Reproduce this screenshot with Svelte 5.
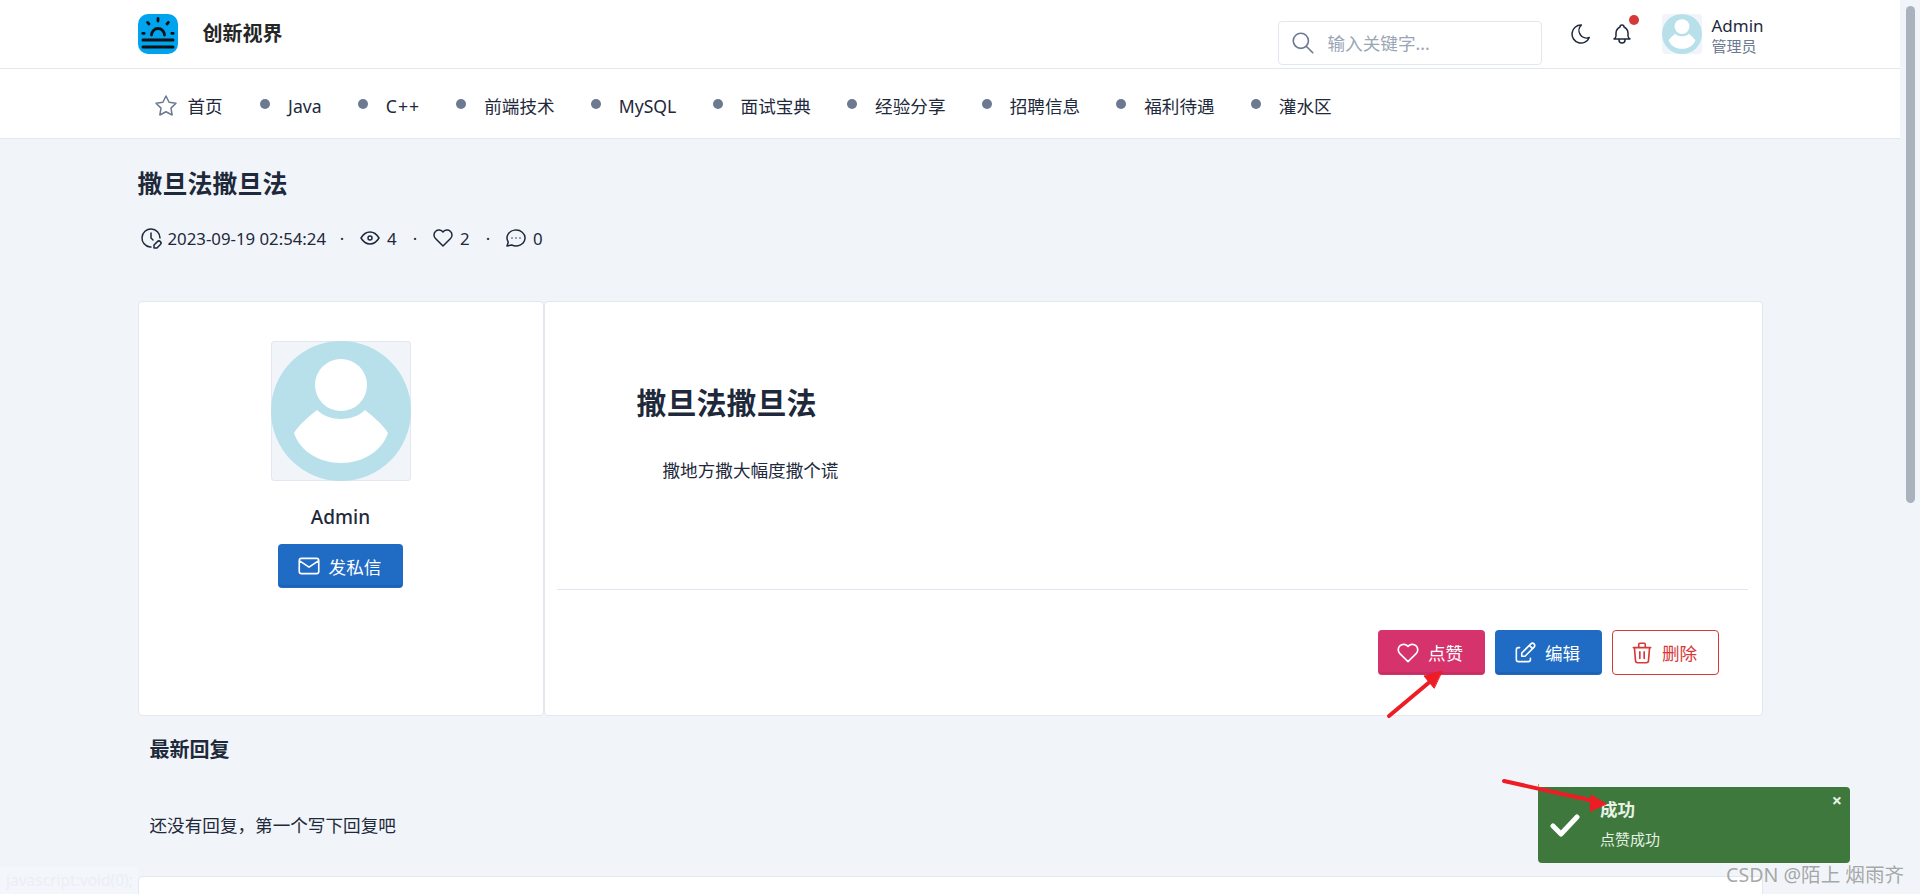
<script lang="ts">
    const navItems = ["Java", "C++", "前端技术", "MySQL", "面试宝典", "经验分享", "招聘信息", "福利待遇", "灌水区"];
</script>

{#snippet avatarArt()}
    <svg viewBox="0 0 140 140" aria-hidden="true">
        <circle cx="70" cy="70" r="70" fill="#b8e0ea" />
        <circle cx="70" cy="44" r="26" fill="#fff" />
        <path
            fill="#fff"
            d="M46 69C36 77 28 84 23 92C29 110 48 122 70 122C92 122 111 110 117 92C112 84 104 77 94 69C88 75 79 78 70 78C61 78 52 75 46 69Z"
        />
    </svg>
{/snippet}

<div class="page">
    <header class="topbar">
        <div class="container topbar-inner">
            <svg class="logo" viewBox="0 0 40 40" aria-hidden="true">
                <rect width="40" height="40" rx="10" fill="#00a3ee" />
                <path d="M13.5 21a6.5 6.5 0 0 1 13 0" fill="none" stroke="#111" stroke-width="2.8" />
                <g fill="#111">
                    <rect x="3.5" y="24.6" width="33" height="3" rx="1.5" />
                    <rect x="3.5" y="31.4" width="33" height="3" rx="1.5" />
                </g>
                <path
                    d="M20 4.5v2.6M9.6 8.4l1.4 1.6M30.4 8.4l-1.4 1.6M4.8 19.4h1.4M33.8 19.4h1.4"
                    fill="none"
                    stroke="#111"
                    stroke-width="2.8"
                    stroke-linecap="round"
                />
            </svg>
            <span class="brand">创新视界</span>
            <label class="search">
                <svg viewBox="0 0 24 24" class="search-icon"><path d="M10 10m-7 0a7 7 0 1 0 14 0a7 7 0 1 0 -14 0M21 21l-6 -6" /></svg>
                <input placeholder="输入关键字..." />
            </label>
            <svg viewBox="0 0 24 24" class="top-icon moon"><path d="M12 3c.132 0 .263 0 .393 0a7.5 7.5 0 0 0 7.92 12.446a9 9 0 1 1 -8.313 -12.454z" /></svg>
            <span class="bell">
                <svg viewBox="0 0 24 24" class="top-icon"><path d="M10 5a2 2 0 1 1 4 0a7 7 0 0 1 4 6v3a4 4 0 0 0 2 3h-16a4 4 0 0 0 2 -3v-3a7 7 0 0 1 4 -6M9 17v1a3 3 0 0 0 6 0v-1" /></svg>
                <i class="badge"></i>
            </span>
            <span class="user-avatar">{@render avatarArt()}</span>
            <div class="user">
                <div class="user-name">Admin</div>
                <div class="user-role">管理员</div>
            </div>
        </div>
    </header>

    <nav class="navbar">
        <div class="container nav-inner">
            <a class="nav-home">
                <svg viewBox="0 0 24 24"><path d="M12 17.75l-6.172 3.245l1.179 -6.873l-5 -4.867l6.9 -1l3.086 -6.253l3.086 6.253l6.9 1l-5 4.867l1.179 6.873z" /></svg>
                首页
            </a>
            {#each navItems as item}
                <a class="nav-item"><i class="nav-dot"></i>{item}</a>
            {/each}
        </div>
    </nav>

    <main class="container">
        <h2 class="page-title">撒旦法撒旦法</h2>
        <div class="meta">
            <svg viewBox="0 0 24 24"><path d="M21 12a9 9 0 1 0 -9.972 8.948c.32 .034 .644 .052 .972 .052M12 7v5l2 2M18.42 15.61a2.1 2.1 0 0 1 2.97 2.97l-3.39 3.42h-3v-3l3.42 -3.39z" /></svg>
            <span>2023-09-19 02:54:24</span>
            <b>·</b>
            <svg viewBox="0 0 24 24"><path d="M10 12a2 2 0 1 0 4 0a2 2 0 0 0 -4 0M21 12c-2.4 4 -5.4 6 -9 6c-3.6 0 -6.6 -2 -9 -6c2.4 -4 5.4 -6 9 -6c3.6 0 6.6 2 9 6" /></svg>
            <span>4</span>
            <b>·</b>
            <svg viewBox="0 0 24 24"><path d="M19.5 12.572l-7.5 7.428l-7.5 -7.428a5 5 0 1 1 7.5 -6.566a5 5 0 1 1 7.5 6.572" /></svg>
            <span>2</span>
            <b>·</b>
            <svg viewBox="0 0 24 24"><path d="M3 20l1.3 -3.9a9 8 0 1 1 3.4 2.9l-4.7 1M12 12l0 .01M8 12l0 .01M16 12l0 .01" /></svg>
            <span>0</span>
        </div>

        <section class="post">
            <aside class="card author">
                <span class="author-avatar">{@render avatarArt()}</span>
                <div class="author-name">Admin</div>
                <button class="btn btn-blue pm">
                    <svg viewBox="0 0 24 24"><path d="M3 7a2 2 0 0 1 2 -2h14a2 2 0 0 1 2 2v10a2 2 0 0 1 -2 2h-14a2 2 0 0 1 -2 -2v-10zM3 7l9 6l9 -6" /></svg>
                    发私信
                </button>
            </aside>
            <article class="card body">
                <div class="body-text">
                    <h1>撒旦法撒旦法</h1>
                    <p>撒地方撒大幅度撒个谎</p>
                </div>
                <div class="actions">
                    <button class="btn btn-pink">
                        <svg viewBox="0 0 24 24"><path d="M19.5 12.572l-7.5 7.428l-7.5 -7.428a5 5 0 1 1 7.5 -6.566a5 5 0 1 1 7.5 6.572" /></svg>
                        点赞
                    </button>
                    <button class="btn btn-blue">
                        <svg viewBox="0 0 24 24"><path d="M7 7h-1a2 2 0 0 0 -2 2v9a2 2 0 0 0 2 2h9a2 2 0 0 0 2 -2v-1M20.385 6.585a2.1 2.1 0 0 0 -2.97 -2.97l-8.415 8.385v3h3l8.385 -8.415zM16 5l3 3" /></svg>
                        编辑
                    </button>
                    <button class="btn btn-outline">
                        <svg viewBox="0 0 24 24"><path d="M4 7h16M10 11v6M14 11v6M5 7l1 12a2 2 0 0 0 2 2h8a2 2 0 0 0 2 -2l1 -12M9 7v-3a1 1 0 0 1 1 -1h4a1 1 0 0 1 1 1v3" /></svg>
                        删除
                    </button>
                </div>
            </article>
        </section>

        <h3 class="reply-title">最新回复</h3>
        <p class="no-reply">还没有回复，第一个写下回复吧</p>
        <section class="card reply-box"></section>
    </main>

    <div class="toast">
        <svg class="toast-check" viewBox="0 0 30 24"><path d="M3 13l8 8L27 4" /></svg>
        <div>
            <div class="toast-title">成功</div>
            <div class="toast-text">点赞成功</div>
        </div>
        <span class="toast-close">×</span>
    </div>

    <svg class="arrows" viewBox="0 0 1920 894" aria-hidden="true">
        <path class="shaft" d="M1389 716L1432 680" />
        <path class="tip" d="M1442 671L1424 676L1434 688Z" />
        <path class="shaft" d="M1504 781L1594 801" />
        <path class="tip" d="M1606 804L1591 795L1590 811Z" />
        <path class="mark" d="M1538.5 784V787" />
    </svg>

    <div class="status">javascript:void(0);</div>
    <div class="scrollbar"><i></i></div>
    <div class="watermark">CSDN @陌上 烟雨齐</div>
</div>

<style>
    :global(body) {
        margin: 0;
        background: #f1f5f9;
        overflow: hidden;
    }

    .page {
        box-sizing: border-box;
        width: 1920px;
        height: 894px;
        padding-right: 20px;
        overflow: hidden;
        font-family: "Noto Sans", "Noto Sans CJK SC", sans-serif;
        font-size: 17.6px;
        color: #1e293b;
    }

    svg {
        fill: none;
        stroke: currentColor;
        stroke-width: 1.5;
        stroke-linecap: round;
        stroke-linejoin: round;
    }

    .container {
        width: 1625px;
        margin: 0 auto;
    }

    .topbar {
        height: 68px;
        background: #fff;
        border-bottom: 1px solid #e2e8f0;
    }

    .topbar-inner {
        display: flex;
        align-items: center;
        height: 68px;
    }

    .logo {
        width: 40px;
        height: 40px;
        stroke: none;
    }

    .brand {
        margin-left: 25px;
        margin-right: auto;
        margin-bottom: 3px;
        font-size: 20px;
        font-weight: 600;
        color: #262626;
    }

    .search {
        display: flex;
        align-items: center;
        box-sizing: border-box;
        width: 264px;
        height: 44px;
        margin-top: 18px;
        padding-left: 11px;
        background: #fff;
        border: 1px solid #e2e8f0;
        border-radius: 4px;
    }

    .search-icon {
        width: 26px;
        height: 26px;
        color: #6c7a91;
    }

    .search input {
        border: 0;
        outline: 0;
        width: 190px;
        margin-left: 12px;
        padding: 0;
        font: inherit;
    }

    .search input::placeholder {
        color: #9aa5b5;
    }

    .top-icon {
        display: block;
        width: 24px;
        height: 24px;
    }

    .moon {
        margin-left: 27px;
    }

    .bell {
        position: relative;
        margin-left: 17px;
    }

    .badge {
        position: absolute;
        top: -7px;
        right: -5px;
        width: 10px;
        height: 10px;
        border-radius: 50%;
        background: #d63939;
    }

    .user-avatar {
        display: block;
        width: 40px;
        height: 40px;
        margin-left: 28px;
        background: #f1f5f9;
        border-radius: 4px;
        overflow: hidden;
    }

    .user-avatar svg,
    .author-avatar svg {
        display: block;
        width: 100%;
        height: 100%;
        stroke: none;
    }

    .user {
        margin-left: 10px;
        margin-top: 3px;
        width: 51px;
        line-height: 20px;
    }

    .user-name {
        font-size: 17px;
    }

    .user-role {
        font-size: 15px;
        color: #6c7a91;
    }

    .navbar {
        height: 69px;
        background: #fff;
        border-bottom: 1px solid #e2e8f0;
    }

    .nav-inner {
        display: flex;
        align-items: center;
        height: 69px;
        padding: 4px 0 0 16px;
        box-sizing: border-box;
    }

    .nav-home {
        display: flex;
        align-items: center;
        gap: 10px;
    }

    .nav-home svg {
        width: 24px;
        height: 24px;
        color: #6c7a91;
    }

    .nav-item {
        display: flex;
        align-items: center;
        margin-left: 36.2px;
    }

    .nav-item:nth-child(2) {
        margin-left: 37.4px;
    }

    .nav-item:nth-child(3) {
        letter-spacing: 1px;
    }

    .nav-dot {
        width: 10px;
        height: 10px;
        margin-right: 18px;
        margin-top: -4px;
        border-radius: 50%;
        background: #6c7a91;
    }

    .page-title {
        margin: 0;
        padding-top: 26px;
        font-size: 25px;
        line-height: 36px;
        font-weight: 700;
    }

    .meta {
        display: flex;
        align-items: center;
        height: 24px;
        margin-top: 25px;
        padding-left: 1px;
        font-size: 16.8px;
    }

    .meta svg {
        width: 24px;
        height: 24px;
        margin-right: 5px;
    }

    .meta span {
        min-width: 12px;
    }

    .meta b {
        width: 32px;
        text-align: center;
        font-weight: 400;
    }

    .post {
        display: flex;
        margin-top: 51px;
    }

    .card {
        box-sizing: border-box;
        background: #fff;
        border: 1px solid #e2e8f0;
        border-radius: 4px;
    }

    .author {
        display: flex;
        flex-direction: column;
        align-items: center;
        width: 406px;
        height: 415px;
        padding-top: 39px;
    }

    .author-avatar {
        display: block;
        box-sizing: border-box;
        width: 140px;
        height: 140px;
        background: #f1f5f9;
        box-shadow: inset 0 0 0 1px #e2e8f0;
        border-radius: 4px;
        overflow: hidden;
    }

    .author-name {
        margin-top: 24px;
        line-height: 24px;
        font-size: 19px;
        font-weight: 500;
    }

    .btn {
        display: flex;
        align-items: center;
        justify-content: center;
        gap: 7px;
        box-sizing: border-box;
        width: 107px;
        height: 45px;
        padding: 0 4px 0 0;
        border: 1px solid transparent;
        border-radius: 4px;
        font: inherit;
        color: #fff;
        box-shadow: inset 0 -2px 0 rgba(0, 0, 0, 0.08);
    }

    .btn svg {
        width: 26px;
        height: 26px;
    }

    .btn-blue {
        background: #206bc4;
    }

    .btn-pink {
        background: #d6336c;
    }

    .btn-outline {
        background: #fff;
        border-color: #d63939;
        color: #d63939;
        box-shadow: none;
    }

    .pm {
        width: 125px;
        height: 44px;
        margin-top: 15px;
    }

    .body {
        flex: 1;
        height: 415px;
        padding: 0 14px 0 12px;
    }

    .body-text {
        height: 288px;
        box-sizing: border-box;
        padding: 83px 0 0 80px;
        border-bottom: 1px solid #e2e8f0;
    }

    .body-text h1 {
        margin: 0;
        font-size: 30px;
        line-height: 36px;
        font-weight: 700;
    }

    .body-text p {
        margin: 37px 0 0 26px;
        line-height: 24px;
    }

    .actions {
        display: flex;
        justify-content: flex-end;
        gap: 10px;
        padding: 40px 29px 0 0;
    }

    .reply-title {
        margin: 22px 0 0 12px;
        font-size: 20px;
        line-height: 24px;
        font-weight: 700;
    }

    .no-reply {
        margin: 51px 0 0 12px;
        line-height: 24px;
    }

    .reply-box {
        height: 120px;
        margin-top: 39px;
    }

    .toast {
        position: absolute;
        left: 1538px;
        top: 787px;
        display: flex;
        box-sizing: border-box;
        width: 312px;
        height: 76px;
        padding: 11px 0 0 62px;
        background: #3e783d;
        border-radius: 4px;
        color: #e6f2e4;
    }

    .toast-check {
        position: absolute;
        left: 12px;
        top: 26px;
        width: 30px;
        height: 24px;
        color: #fff;
        stroke-width: 5;
    }

    .toast-title {
        font-size: 17.6px;
        line-height: 22px;
        font-weight: 700;
    }

    .toast-text {
        margin-top: 9px;
        font-size: 15px;
        line-height: 20px;
    }

    .toast-close {
        position: absolute;
        right: 8px;
        top: 3px;
        font-size: 18px;
        line-height: 20px;
        font-weight: 700;
    }

    .arrows {
        position: absolute;
        inset: 0;
        width: 1920px;
        height: 894px;
        pointer-events: none;
    }

    .arrows .shaft {
        stroke: #ee1c25;
        stroke-width: 4;
    }

    .arrows .tip {
        fill: #ee1c25;
        stroke: #ee1c25;
        stroke-width: 1;
    }

    .arrows .mark {
        stroke: #a4b83c;
        stroke-width: 1;
        stroke-linecap: butt;
    }

    .watermark {
        position: absolute;
        left: 1726px;
        top: 861px;
        font-size: 19.6px;
        line-height: 28px;
        white-space: nowrap;
        color: rgba(140, 140, 140, 0.75);
    }

    .status {
        position: absolute;
        left: 0;
        bottom: 0;
        box-sizing: border-box;
        width: 138px;
        height: 27px;
        padding: 2px 0 0 6px;
        font-size: 15.5px;
        background: #f3f6fa;
        color: #ebeff5;
        white-space: nowrap;
        overflow: hidden;
    }

    .scrollbar {
        position: absolute;
        left: 1900px;
        top: 0;
        width: 20px;
        height: 894px;
        background: #f1f5f9;
    }

    .scrollbar i {
        display: block;
        width: 9px;
        height: 497px;
        margin: 6px 0 0 6px;
        border-radius: 5px;
        background: #a9b2bd;
    }
</style>
